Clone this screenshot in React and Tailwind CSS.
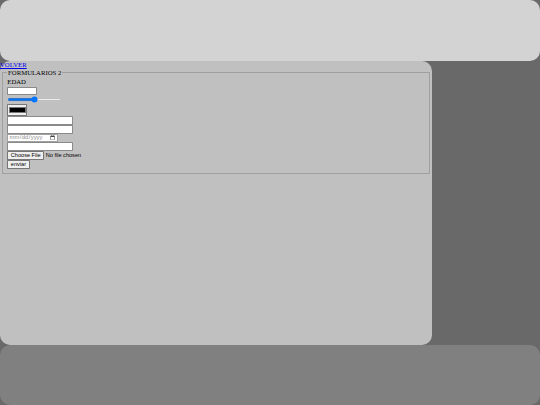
export default function App() {
  return (
    <div className="h-[405px] w-[540px] overflow-hidden bg-[#696969] font-['Liberation_Serif',serif] text-black">
      {/* Header */}
      <header className="h-[61px] rounded-[10px] bg-[#d3d3d3]" />

      {/* Main */}
      <main className="h-[284px] w-[432px] rounded-[10px] bg-[#c0c0c0]">
        <div className="[zoom:0.42] text-[16px] leading-[18px]">
          <a href="#" className="text-[#0000ee] underline">
            VOLVER
          </a>

          <form>
            <fieldset className="mx-[5px] border-2 border-[#a0a0a0] px-[10px] pt-[5px] pb-[10px]">
              <legend className="px-[2px]">FORMULARIOS 2</legend>

              <div className="flex flex-col items-start">
                <label className="h-[20px] leading-[19px]">EDAD</label>
                <input
                  type="text"
                  className="h-[21px] w-[71px] rounded-[2px] border border-[#8a8a8a] bg-white px-[2px] font-['Liberation_Sans',sans-serif] text-[13.33px]"
                />
                <input type="range" className="my-[2px] h-[16px] w-[131px]" />
                <input
                  type="color"
                  defaultValue="#000000"
                  className="my-[1px] h-[27px] w-[48px] rounded-[2px] border border-[#767676] bg-[#efefef]"
                />
                <input
                  type="text"
                  className="h-[21px] w-[157px] rounded-[2px] border border-[#8a8a8a] bg-white px-[2px] font-['Liberation_Sans',sans-serif] text-[13.33px]"
                />
                <input
                  type="text"
                  className="h-[21px] w-[157px] rounded-[2px] border border-[#8a8a8a] bg-white px-[2px] font-['Liberation_Sans',sans-serif] text-[13.33px]"
                />
                <input
                  type="date"
                  className="h-[21px] w-[121px] rounded-[2px] border border-[#a0a0a0] bg-white px-[2px] font-['Liberation_Sans',sans-serif] text-[14px] text-[#8c8c8c]"
                />
                <input
                  type="text"
                  className="h-[21px] w-[157px] rounded-[2px] border border-[#8a8a8a] bg-white px-[2px] font-['Liberation_Sans',sans-serif] text-[13.33px]"
                />
                <input
                  type="file"
                  className="h-[21px] w-[250px] font-['Liberation_Sans',sans-serif] text-[13.33px] file:mr-[4px] file:h-[21px] file:rounded-[2px] file:border file:border-[#767676] file:bg-[#efefef] file:px-[6px]"
                />
                <input
                  type="submit"
                  value="enviar"
                  className="h-[21px] rounded-[2px] border border-[#767676] bg-[#efefef] px-[6px] font-['Liberation_Sans',sans-serif] text-[13.33px]"
                />
              </div>
            </fieldset>
          </form>
        </div>
      </main>

      {/* Footer */}
      <footer className="h-[60px] rounded-[10px] bg-[#808080]" />
    </div>
  );
}
